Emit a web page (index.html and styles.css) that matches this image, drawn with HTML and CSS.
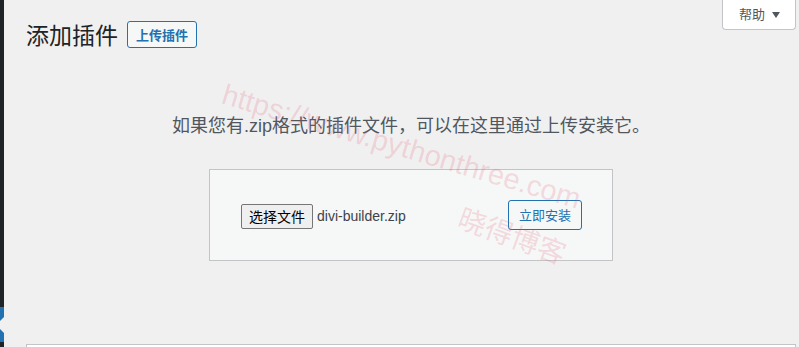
FILE: index.html
```html
<!DOCTYPE html>
<html lang="zh-CN">
<head>
<meta charset="utf-8">
<title>添加插件</title>
<link rel="stylesheet" href="styles.css">
</head>
<body>
<div class="layout">
  <aside class="sidebar">
    <div class="menu-current"></div>
  </aside>
  <main class="content">
    <div class="help-tab">帮助 <span class="caret"></span></div>
    <div class="title-row">
      <h1 class="page-title">添加插件</h1>
      <a class="title-action">上传插件</a>
    </div>
    <p class="install-help">如果您有.zip格式的插件文件，可以在这里通过上传安装它。</p>
    <form class="upload-form">
      <div class="file-field">
        <button type="button" class="file-button">选择文件</button>
        <span class="file-name">divi-builder.zip</span>
      </div>
      <button type="button" class="install-button">立即安装</button>
    </form>
    <div class="list-box"></div>
  </main>
</div>
<div class="watermark">
  <span class="wm-url">https://www.pythonthree.com</span>
  <span class="wm-name">晓得博客</span>
</div>
</body>
</html>
```
FILE: styles.css
```css
html, body {
  margin: 0;
  padding: 0;
}
body {
  background: #f0f0f1;
  width: 799px;
  height: 347px;
  overflow: hidden;
  position: relative;
  font-family: "Liberation Sans", "Noto Sans CJK SC", sans-serif;
  color: #3c434a;
}
.layout {
  display: flex;
  height: 347px;
}
.sidebar {
  width: 4px;
  flex: 0 0 4px;
  background: #1d2327;
  overflow: hidden;
}
.menu-current {
  margin-top: 307px;
  height: 35px;
  background: #2271b1;
  position: relative;
}
.menu-current::after {
  content: "";
  position: absolute;
  right: 0;
  top: 50%;
  margin-top: -8px;
  width: 0;
  height: 0;
  border: 8px solid transparent;
  border-left: none;
  border-right-color: #f0f0f1;
}
.content {
  flex: 1;
  padding: 0 3px 0 22px;
}
.help-tab {
  float: right;
  box-sizing: border-box;
  height: 30px;
  padding: 0 15px 0 16px;
  background: #fff;
  border: 1px solid #c3c4c7;
  border-top: none;
  border-radius: 0 0 4px 4px;
  color: #50575e;
  font-size: 13px;
  line-height: 28px;
  font-family: "Noto Sans CJK SC", sans-serif;
}
.caret {
  display: inline-block;
  width: 0;
  height: 0;
  margin-left: 4px;
  border-left: 4px solid transparent;
  border-right: 4px solid transparent;
  border-top: 6px solid #50575e;
  vertical-align: 1px;
}
.title-row {
  display: flex;
  align-items: center;
  margin-top: 19px;
  height: 30px;
}
.page-title {
  margin: 0;
  font-size: 23px;
  font-weight: 400;
  line-height: 30px;
  color: #1d2327;
  font-family: "Noto Sans CJK SC", sans-serif;
}
.title-action {
  margin-left: 9px;
  box-sizing: border-box;
  height: 27px;
  padding: 0 8px;
  border: 1px solid #2271b1;
  border-radius: 3px;
  background: #f6f7f7;
  color: #2271b1;
  font-size: 13px;
  font-weight: 700;
  line-height: 25px;
  font-family: "Noto Sans CJK SC", sans-serif;
}
.install-help {
  margin: 64px 0 0;
  text-align: center;
  font-size: 18px;
  line-height: 27px;
  color: #50575e;
}
.upload-form {
  margin: 29px auto 0;
  width: 404px;
  box-sizing: border-box;
  padding: 30px 30px 30px 31px;
  background: #f6f7f7;
  border: 1px solid #c3c4c7;
  display: flex;
  justify-content: space-between;
  align-items: center;
}
.file-field {
  display: flex;
  align-items: center;
  gap: 4px;
  margin-top: 2px;
}
.file-button {
  box-sizing: border-box;
  height: 25px;
  padding: 0 7px;
  margin: 0;
  background: #efefef;
  border: 1px solid #767676;
  border-radius: 2px;
  color: #000;
  font-size: 14px;
  line-height: 23px;
  font-family: "Noto Sans CJK SC", sans-serif;
}
.file-name {
  font-size: 14px;
  color: #3c434a;
}
.install-button {
  box-sizing: border-box;
  height: 30px;
  padding: 0 10px;
  margin: 0;
  background: #f6f7f7;
  border: 1px solid #2271b1;
  border-radius: 3px;
  color: #2271b1;
  font-size: 13px;
  line-height: 28px;
  font-family: "Noto Sans CJK SC", sans-serif;
}
.list-box {
  margin-top: 83px;
  height: 2px;
  background: #fff;
  border: 1px solid #c3c4c7;
  border-bottom: none;
}
.watermark {
  position: absolute;
  inset: 0;
  pointer-events: none;
}
.wm-url,
.wm-name {
  position: absolute;
  transform-origin: 0 0;
  white-space: nowrap;
  color: rgba(226, 90, 110, 0.2);
  font-size: 28px;
  line-height: 28px;
}
.wm-url {
  left: 227px;
  top: 80px;
  font-size: 29px;
  transform: rotate(16.5deg);
  font-family: "Liberation Sans", sans-serif;
}
.wm-name {
  left: 465px;
  top: 202px;
  transform: rotate(20deg);
  font-family: "Noto Sans CJK SC", sans-serif;
}
```
